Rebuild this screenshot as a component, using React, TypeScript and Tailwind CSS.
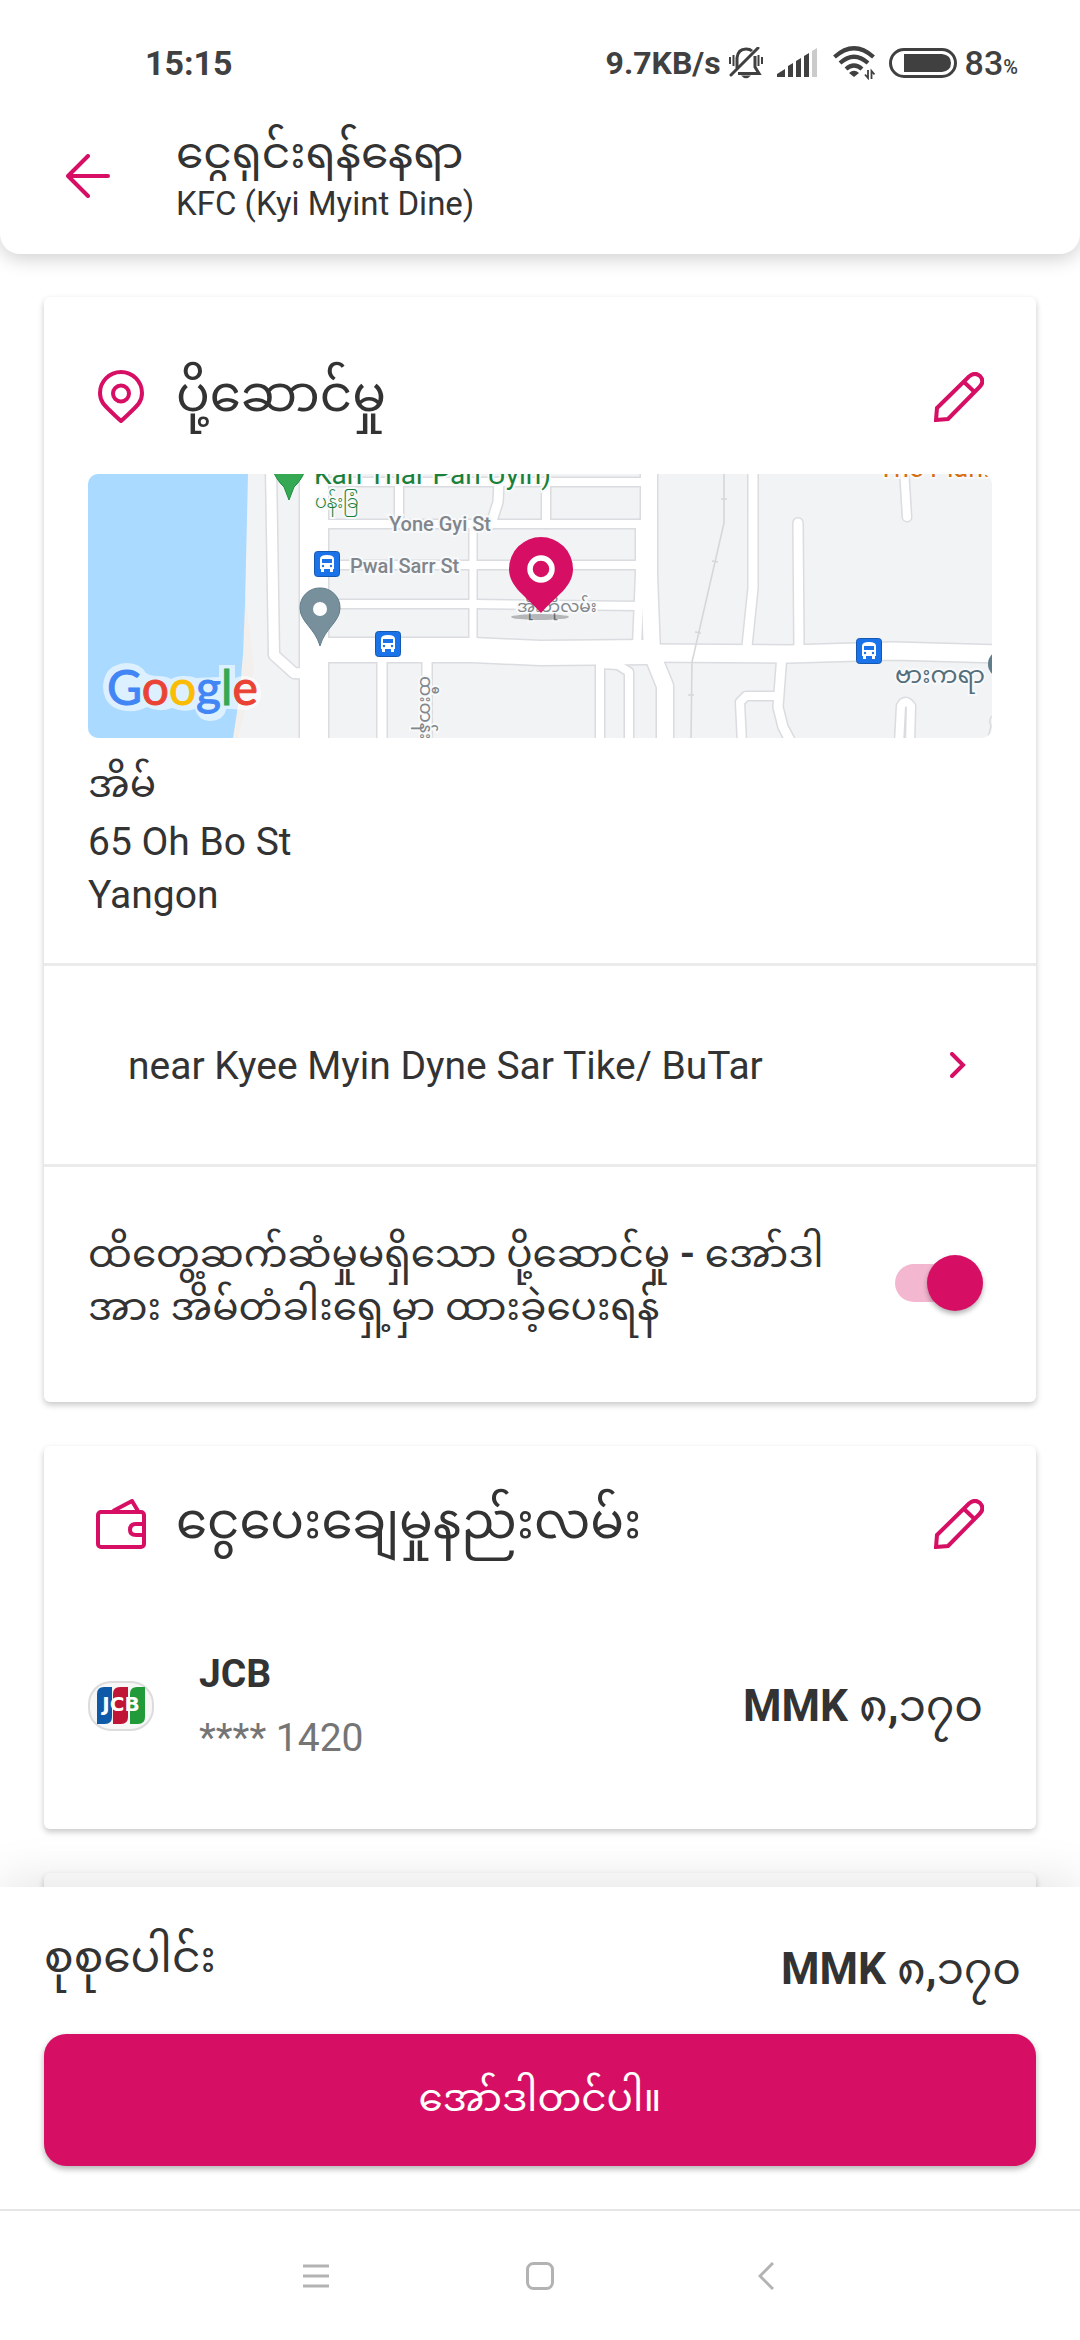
import { useState } from "react";
import type { ReactNode } from "react";

const landRoads = [
  { d: "M183 -6 L186 181 L206 199 L228 200", w: 10 },
  { d: "M226 -6 V270", w: 28 },
  { d: "M226 8 H561", w: 8 },
  { d: "M226 50 H561", w: 8 },
  { d: "M226 91 H551", w: 8 },
  { d: "M226 130 L385 130 L551 132", w: 8 },
  { d: "M311 8 V50", w: 8 },
  { d: "M411 8 L410 28 L403 50", w: 9 },
  { d: "M458 8 V50", w: 8 },
  { d: "M385 50 V172", w: 7 },
  { d: "M552 50 V100 L549 172", w: 8 },
  { d: "M226 176 L385 176 L452 179 L561 178", w: 24 },
  { d: "M561 -6 V100 L564 180 L577 212 V270", w: 16 },
  { d: "M561 179 L700 180 L805 177 L910 180", w: 17 },
  { d: "M294 176 V270", w: 9 },
  { d: "M339 176 V270", w: 9 },
  { d: "M512 180 V270", w: 8 },
  { d: "M512 190 L530 191 L541 198 V270", w: 8 },
  { d: "M665 -6 V114 L658 182", w: 9 },
  { d: "M710 49 L711 174", w: 9 },
  { d: "M816 -6 L819 43", w: 8 },
  { d: "M694 180 L690 233 L695 253 L704 270", w: 9 },
  { d: "M690 222 H658 L652 228 L654 270", w: 8 },
  { d: "M811 270 L813 232 Q817 224 823 232 L822 270", w: 8 },
];

const streetLabel =
  "fill-[#80868b] stroke-[#f8f9fa] stroke-4 font-medium [paint-order:stroke]";

function BusStop({ x, y }: { x: number; y: number }) {
  return (
    <g transform={`translate(${x} ${y})`}>
      <rect x="0.5" y="0.5" width="25" height="25" rx="3" fill="#1a73e8" stroke="#1558b0" />
      <path
        d="M6 8 Q6 4 13 4 Q20 4 20 8 V18 H19 V21 H16 V18 H10 V21 H7 V18 H6 Z"
        fill="#fff"
      />
      <rect x="8" y="8" width="10" height="4" fill="#1a73e8" />
      <circle cx="9" cy="15" r="1.2" fill="#1a73e8" />
      <circle cx="17" cy="15" r="1.2" fill="#1a73e8" />
    </g>
  );
}

function GoogleMark() {
  return (
    <g>
      {/* light cloud behind the letters */}
      <path
        d="M39 189 Q52 189 58 199 Q62 202 70 202 Q78 202 83 205 Q88 202 96 202 Q104 202 108 204 L131 203 V191 H147 V204 Q151 202 156 202 Q174 203 173 222 Q170 236 156 236 Q149 236 145 235 H138 Q136 247 121 247 Q110 246 107 235 Q96 239 84 234 Q70 239 59 233 Q50 238 39 237 Q16 235 15 213 Q16 190 39 189 Z"
        fill="#fff"
        opacity="0.6"
      />
      <text x="19" y="231" strokeWidth="1" className="font-['Lato',sans-serif] text-[48px]">
        <tspan fill="#4285f4" stroke="#4285f4">G</tspan>
        <tspan fill="#ea4335" stroke="#ea4335">o</tspan>
        <tspan fill="#fbbc04" stroke="#fbbc04">o</tspan>
        <tspan fill="#4285f4" stroke="#4285f4">g</tspan>
        <tspan fill="#34a853" stroke="#34a853">l</tspan>
        <tspan fill="#ea4335" stroke="#ea4335">e</tspan>
      </text>
    </g>
  );
}

function DeliveryMap() {
  return (
    <svg
      viewBox="0 0 904 264"
      preserveAspectRatio="xMidYMid slice"
      className="block w-full rounded-[10px]"
      role="img"
      aria-label="Map"
    >
      <rect width="904" height="264" fill="#f1f3f5" />
      <path d="M157 120 L166 196 L150 264 H140 Z" fill="#f2efec" />
      <path d="M0 0 H160 L157 130 L155 180 L151 225 L145 264 H0 Z" fill="#aadaff" />
      <g fill="none" stroke="#dadce0" strokeLinecap="round" strokeLinejoin="round">
        {landRoads.map((r) => (
          <path key={r.d} d={r.d} strokeWidth={r.w + 3} />
        ))}
      </g>
      <g fill="none" stroke="#fff" strokeLinecap="round" strokeLinejoin="round">
        {landRoads.map((r) => (
          <path key={r.d} d={r.d} strokeWidth={r.w} />
        ))}
      </g>
      {/* railway */}
      <path
        d="M636 0 V49 L604 188 L603 264 M633 25 H639 M624 87 L630 88 M607 158 L613 159 M600 221 H606"
        fill="none"
        stroke="#d5d7da"
        strokeWidth="1.6"
      />
      <path d="M904 242 Q900 246 903 252 L900 264" fill="none" stroke="#dadce0" strokeWidth="1.5" />

      <path d="M183 -8 H219 Q214 6 206 13 L201 26 L196 13 Q188 6 183 -8 Z" fill="#34a853" stroke="#1e8e3e" />
      <text x="226" y="10" className="fill-[#188038] stroke-[#f8f9fa] stroke-4 text-[28px] [paint-order:stroke]">
        Kan Thar Pan Uyin)
      </text>
      <text x="227" y="34" className="fill-[#188038] stroke-[#f8f9fa] stroke-4 font-light text-[18px] [paint-order:stroke]">
        ပန်းခြံ
      </text>
      <text x="790" y="3" className="fill-[#d56e0c] stroke-[#f8f9fa] stroke-4 text-[27px] [paint-order:stroke]">
        The Plan.
      </text>
      <text x="301" y="57" className={`${streetLabel} text-[20px]`}>
        Yone Gyi St
      </text>
      <text x="262" y="99" className={`${streetLabel} text-[20px]`}>
        Pwal Sarr St
      </text>
      <text x="429" y="138" className="fill-[#80868b] stroke-[#f8f9fa] stroke-4 text-[17px] [paint-order:stroke]">
        အိုးဘိုလမ်း
      </text>
      <text x="807" y="209" className="fill-[#546e7a] stroke-[#f8f9fa] stroke-4 text-[24px] [paint-order:stroke]">
        ဗားကရာ
      </text>
      <text
        transform="translate(332 202) rotate(90)"
        className="fill-[#80868b] stroke-[#f8f9fa] stroke-4 text-[18px] [paint-order:stroke]"
      >
        ထီးတန်း
      </text>

      <BusStop x={226} y={77} />
      <BusStop x={287} y={157} />
      <BusStop x={768} y={164} />

      <circle cx="914" cy="190" r="14" fill="#607d8b" />
      <path
        d="M232 114 A19.500 19.500 0 0 1 252 134 C252 148 237 154 232 172 C227 154 212 148 212 134 A19.500 19.500 0 0 1 232 114 Z"
        fill="#78909c"
        stroke="#607d8b"
      />
      <circle cx="232" cy="135" r="7" fill="#fff" />

      <ellipse cx="452" cy="143" rx="29" ry="3" fill="#000" opacity="0.25" />
      <path
        d="M453 63 A32 32 0 0 1 485 95 C485 113 468 122 453 139 C438 122 421 113 421 95 A32 32 0 0 1 453 63 Z"
        fill="#d70f64"
      />
      <circle cx="453" cy="95" r="11" fill="none" stroke="#fff" strokeWidth="5.500" />

      <GoogleMark />
    </svg>
  );
}

function Pencil() {
  return (
    <svg viewBox="0 0 50 50" className="size-[50px]" fill="none" stroke="#d70f64" strokeWidth="4">
      <path d="M2 48 L3 36 L35 4.500 Q41 -0.500 46 4 Q51 9.500 45.500 15 L14 47 Z" />
      <path d="M30 10 L40.500 20" />
    </svg>
  );
}

function StatusBar() {
  return (
    <div className="flex h-[124px] items-center pt-[2px] pr-[62px] pl-[145px] text-[34px] text-[#404040]">
      <span className="font-bold">15:15</span>
      <span className="ml-auto text-[32px] font-bold">9.7KB/s</span>
      <svg viewBox="0 0 34 32" className="ml-2 h-8 w-[34px]" fill="none" stroke="#404040">
        <path
          d="M8 21 V11 Q9 2 17 2 Q21 2 23 4 M26 9 V20 L30 26.500 H9"
          strokeWidth="3"
        />
        <path d="M29 1 L2 28" strokeWidth="3" strokeLinecap="round" />
        <path d="M12 28.500 H22 Q17 34 12 28.500 Z" fill="#404040" stroke="none" />
        <path d="M1 10 V17 M4.500 8 V19 M29.500 8 V19 M33 10 V17" strokeWidth="2" />
      </svg>
      <svg viewBox="0 0 40 30" className="ml-[14px] h-[30px] w-10" fill="#404040">
        <path d="M0 29 V26 L8 21 V29 Z M11 29 V18 L16 15 V29 Z M19 29 V13 L24 10 V29 Z M27 29 V8 L32 5 V29 Z" />
        <path d="M35 29 V3 L40 0 V29 Z" fill="#cbcbcb" />
      </svg>
      <svg viewBox="0 0 42 34" className="ml-4 h-[34px] w-[42px]" fill="none" stroke="#404040" strokeWidth="4.200">
        <path d="M1.500 11 Q21 -6.500 40.500 11" />
        <path d="M7 17 Q21 4.500 35 17" />
        <path d="M13 23 Q21 16 29 23" />
        <path d="M16 27 Q21 22.500 26 27 L21 31 Z" fill="#404040" stroke="none" />
        <path d="M35 24 V32 L32 28.500 M38.500 33 V25 L41.500 28.500" strokeWidth="1.800" />
      </svg>
      <svg viewBox="0 0 68 30" className="ml-[14px] h-[30px] w-[68px]">
        <rect x="1.500" y="1.500" width="65" height="27" rx="13.500" fill="none" stroke="#404040" strokeWidth="3" />
        <path d="M15 6 H53 Q62 7 62 15 Q62 23 53 24 H15 Z" fill="#404040" />
      </svg>
      <span className="ml-2 font-medium">83</span>
      <span className="pt-2 text-[20px] font-medium">%</span>
    </div>
  );
}

function SectionHeader({
  icon,
  title,
  editLabel,
}: {
  icon: ReactNode;
  title: string;
  editLabel: string;
}) {
  return (
    <div className="flex h-[155px] items-center px-[52px]">
      {icon}
      <h2 className="mb-[6px] ml-[30px] text-[50px] leading-[60px]">{title}</h2>
      <button type="button" className="ml-auto" aria-label={editLabel}>
        <Pencil />
      </button>
    </div>
  );
}

function Amount() {
  return (
    <p className="text-[44px] font-bold">
      MMK <span className="font-normal">၈</span>,<span className="font-normal">၁၇၀</span>
    </p>
  );
}

export default function App() {
  const [contactless, setContactless] = useState(true);

  return (
    <div className="flex h-screen flex-col bg-white font-['Roboto','Noto_Sans_Myanmar','Noto_Sans',sans-serif] text-[39px] leading-[53px] text-[#333]">
      <header className="z-10 rounded-b-[20px] bg-white pb-[27px] shadow-[0_4px_20px_rgba(0,0,0,0.2)]">
        <StatusBar />
        <div className="flex items-center">
          <button type="button" className="ml-[66px]" aria-label="Back">
            <svg
              viewBox="0 0 44 44"
              className="size-11"
              fill="none"
              stroke="#d70f64"
              strokeWidth="4"
              strokeLinecap="round"
              strokeLinejoin="round"
            >
              <path d="M42 22 H2 M22 2 L2 22 L22 42" />
            </svg>
          </button>
          <div className="ml-[66px]">
            <h1 className="h-[57px] overflow-hidden text-[44px] leading-[59px]">ငွေရှင်းရန်နေရာ</h1>
            <p className="text-[33px] leading-[46px]">KFC (Kyi Myint Dine)</p>
          </div>
        </div>
      </header>

      <main className="flex min-h-0 flex-1 flex-col gap-11 overflow-y-auto px-11 pt-[43px] [scrollbar-width:none]">
        <section className="shrink-0 rounded-md bg-white shadow-[0_3px_6px_rgba(0,0,0,0.22)]">
          <div className="pt-[22px]">
            <SectionHeader
              title="ပို့ဆောင်မှု"
              editLabel="Edit delivery address"
              icon={
                <svg viewBox="0 0 50 54" className="h-[54px] w-[50px]" fill="none" stroke="#d70f64" strokeWidth="4">
                  <path
                    d="M25 2 A21 21 0 0 1 46 23 C46 33 41 36 25 51 C9 36 4 33 4 23 A21 21 0 0 1 25 2 Z"
                    strokeLinejoin="round"
                  />
                  <circle cx="25" cy="23.500" r="8" />
                </svg>
              }
            />
          </div>
          <div className="px-11 pb-[41px]">
            <DeliveryMap />
            <p className="mt-5 mb-[5px]">အိမ်</p>
            <p>65 Oh Bo St</p>
            <p>Yangon</p>
          </div>
          <button
            type="button"
            className="flex h-[204px] w-full items-center justify-between border-y-3 border-[#ebebeb] pr-[70px] pl-[84px] text-left"
          >
            <span className="pt-[2px]">near Kyee Myin Dyne Sar Tike/ BuTar</span>
            <svg viewBox="0 0 16 26" className="h-[26px] w-4" fill="none" stroke="#d70f64" strokeWidth="4">
              <path d="M2 2 L13 13 L2 24" strokeLinecap="round" />
            </svg>
          </button>
          <label className="flex items-center justify-between gap-14 pt-[61px] pr-[53px] pb-[64px] pl-11">
            <span className="pb-1">
              ထိတွေ့ဆက်ဆံမှုမရှိသော ပို့ဆောင်မှု <b>-</b> အော်ဒါအား အိမ်တံခါးရှေ့မှာ ထားခဲ့ပေးရန်
            </span>
            <span className="relative flex h-14 w-[88px] shrink-0 items-center">
              <input
                type="checkbox"
                role="switch"
                checked={contactless}
                onChange={(e) => setContactless(e.target.checked)}
                className="peer h-[38px] w-[76px] appearance-none rounded-full bg-gray-300 checked:bg-[#f3b7d0]"
              />
              <span className="pointer-events-none absolute left-0 size-14 rounded-full bg-gray-50 shadow-[0_3px_5px_rgba(0,0,0,0.3)] peer-checked:right-0 peer-checked:left-auto peer-checked:bg-[#d70f64]" />
            </span>
          </label>
        </section>

        <section className="shrink-0 rounded-md bg-white shadow-[0_3px_6px_rgba(0,0,0,0.22)]">
          <SectionHeader
            title="ငွေပေးချေမှုနည်းလမ်း"
            editLabel="Edit payment method"
            icon={
              <svg
                viewBox="0 0 50 50"
                className="size-[50px]"
                fill="none"
                stroke="#d70f64"
                strokeWidth="4"
                strokeLinejoin="round"
              >
                <rect x="2" y="13" width="46" height="35" rx="3" />
                <path d="M17 12 L36 2 L42 12" />
                <path d="M48 25 H40 Q34 25 34 31 Q34 36 40 36 H48" />
              </svg>
            }
          />
          <div className="flex items-center justify-between pt-[41px] pr-[53px] pb-[59px] pl-11 leading-[64px]">
            <div className="flex items-center">
              <svg viewBox="0 0 66 50" className="h-[50px] w-[66px]" role="img" aria-label="JCB">
                <rect x="1" y="1" width="64" height="48" rx="22" fill="#f7f7f7" stroke="#dcdcdc" strokeWidth="2" />
                <path d="M9 13 Q9 6 16 6 H24 V36 Q24 43 17 43 H9 Z" fill="#0f5aa8" />
                <path d="M25 13 Q25 6 32 6 H40 V36 Q40 43 33 43 H25 Z" fill="#c01536" />
                <path d="M42 13 Q42 6 49 6 H57 V36 Q57 43 50 43 H42 Z" fill="#219a3a" />
                <text x="33" y="30" textAnchor="middle" className="fill-white font-['DejaVu_Sans',sans-serif] text-[20px] font-bold">
                  JCB
                </text>
              </svg>
              <div className="ml-[45px]">
                <p className="font-bold">JCB</p>
                <p className="text-[#757575]">**** 1420</p>
              </div>
            </div>
            <Amount />
          </div>
        </section>

        <section className="min-h-40 shrink-0 rounded-md bg-white shadow-[0_3px_6px_rgba(0,0,0,0.22)]" />
      </main>

      <footer className="z-10 bg-white px-11 pt-10 pb-[43px] shadow-[0_-8px_44px_rgba(0,0,0,0.1)]">
        <div className="flex items-start justify-between pr-[15px] leading-[60px]">
          <p className="text-[44px]">စုစုပေါင်း</p>
          <div className="pt-3">
            <Amount />
          </div>
        </div>
        <button
          type="button"
          className="mt-[35px] h-[132px] w-full rounded-[22px] bg-[#d70f64] pb-1 text-white shadow-[0_3px_6px_rgba(0,0,0,0.3)]"
        >
          အော်ဒါတင်ပါ။
        </button>
      </footer>

      <nav className="z-10 grid h-[131px] grid-cols-[1fr_auto_1fr] items-center gap-[196px] border-t-2 border-[#e6e6e6] bg-white">
        <button type="button" className="justify-self-end" aria-label="Recent apps">
          <svg viewBox="0 0 28 28" className="size-7" stroke="#b3b3b3" strokeWidth="3">
            <path d="M1 4 H27 M1 14 H27 M1 24 H27" />
          </svg>
        </button>
        <button type="button" aria-label="Home">
          <svg viewBox="0 0 28 28" className="size-7" fill="none" stroke="#b3b3b3" strokeWidth="3">
            <rect x="1.500" y="1.500" width="25" height="25" rx="6" />
          </svg>
        </button>
        <button type="button" className="ml-2 justify-self-start" aria-label="Back">
          <svg viewBox="0 0 16 28" className="h-7 w-4" fill="none" stroke="#b3b3b3" strokeWidth="3">
            <path d="M15 1 L2 14 L15 27" />
          </svg>
        </button>
      </nav>
    </div>
  );
}
